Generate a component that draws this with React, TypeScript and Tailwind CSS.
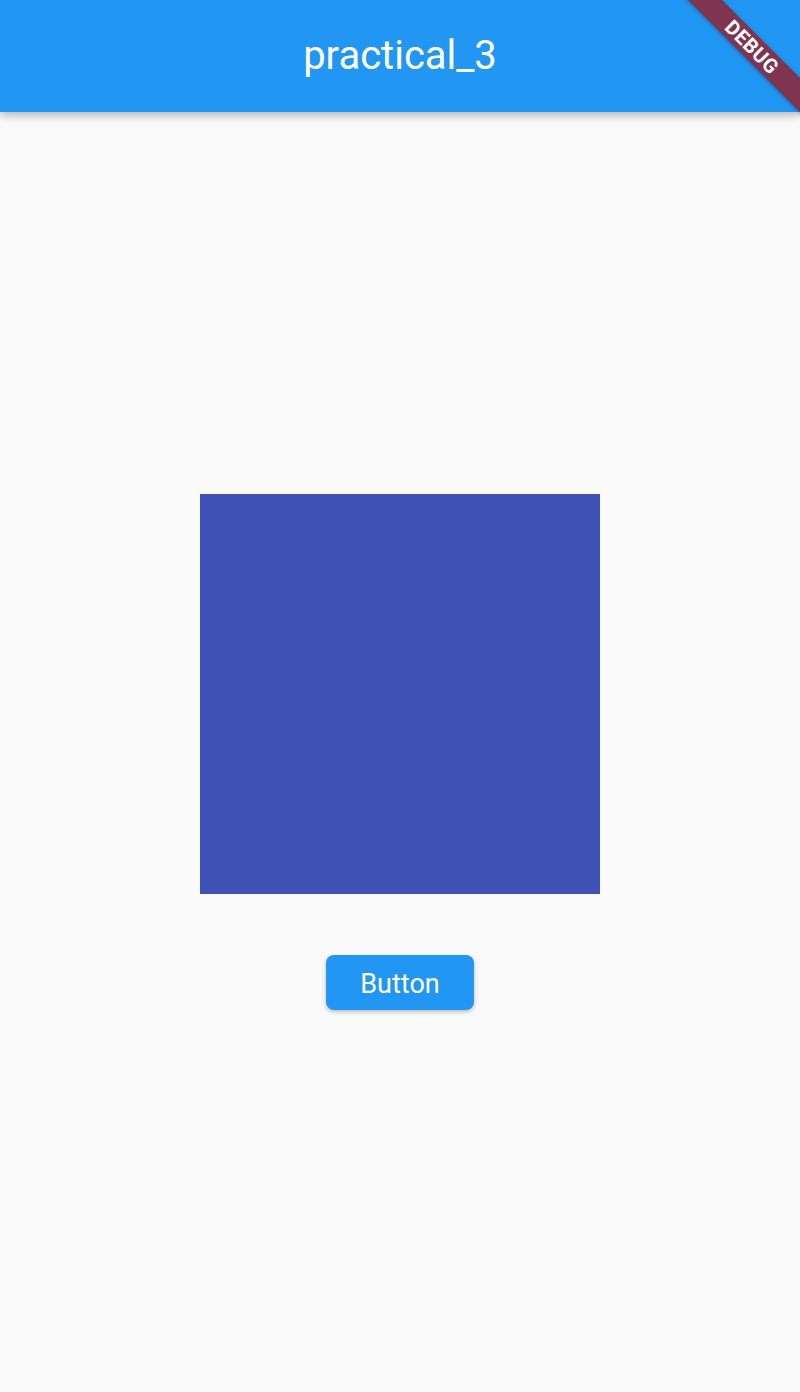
export default function App() {
  return (
    <div
      className="relative w-[800px] h-[1392px] overflow-hidden bg-[#fafafa] flex flex-col"
      style={{ fontFamily: 'Roboto, "Liberation Sans", sans-serif' }}
    >
      {/* app bar */}
      <header className="relative z-10 h-[112px] shrink-0 bg-[#2196f3] flex items-center justify-center shadow-[0_4px_8px_rgba(0,0,0,0.25)]">
        <h1 className="text-white text-[40px] leading-none font-normal">practical_3</h1>
      </header>

      {/* body */}
      <main className="flex-1 flex flex-col items-center justify-center">
        <div className="w-[400px] h-[400px] bg-[#3f51b5]" />
        <button className="mt-[61px] w-[148px] h-[55px] pt-[3px] rounded-[8px] bg-[#2196f3] text-white text-[27px] leading-none shadow-[0_2px_4px_rgba(0,0,0,0.25)]">
          Button
        </button>
      </main>

      {/* debug banner */}
      <div className="absolute z-20 left-[652px] top-[35px] w-[200px] h-[24px] rotate-45 bg-[#7f3450] flex items-center justify-center shadow-[0_1px_4px_rgba(0,0,0,0.3)]">
        <span className="text-white text-[20px] font-bold leading-none tracking-[0.5px]">DEBUG</span>
      </div>
    </div>
  );
}
